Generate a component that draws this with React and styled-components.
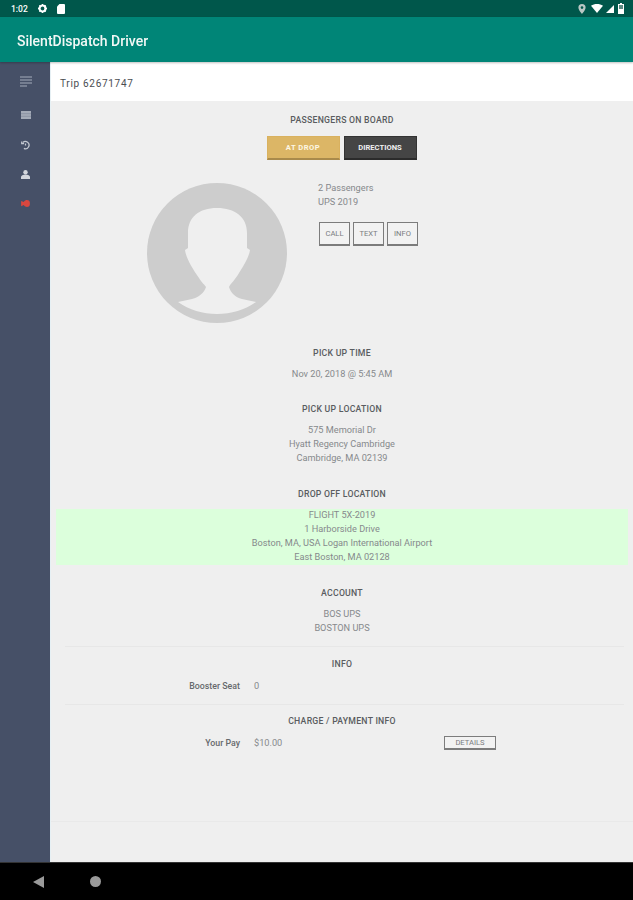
import styled, { createGlobalStyle } from 'styled-components';

const GlobalStyle = createGlobalStyle`
  html, body {
    margin: 0;
    padding: 0;
    background: #000;
  }
  * {
    box-sizing: border-box;
  }
`;

const Screen = styled.div`
  width: 633px;
  height: 900px;
  display: flex;
  flex-direction: column;
  overflow: hidden;
  font-family: Roboto, 'Liberation Sans', sans-serif;
  filter: blur(0.4px);
`;

const StatusBar = styled.div`
  height: 17px;
  flex: none;
  background: #00574b;
  color: #fff;
  display: flex;
  align-items: center;
  padding: 0 9px 0 11px;
  font-size: 8.5px;
  font-weight: 500;
`;

const StatusLeft = styled.div`
  display: flex;
  align-items: center;
  gap: 10px;
`;

const StatusRight = styled.div`
  margin-left: auto;
  display: flex;
  align-items: center;
  gap: 3px;
`;

const AppBar = styled.div`
  height: 45px;
  flex: none;
  background: #008577;
  color: #f2f8f6;
  display: flex;
  align-items: center;
  padding: 3px 0 0 17px;
  font-size: 14px;
  font-weight: 500;
  box-shadow: 0 1px 2px rgba(0, 0, 0, 0.25);
  position: relative;
`;

const Body = styled.div`
  flex: 1;
  min-height: 0;
  display: flex;
`;

const SideNav = styled.nav`
  width: 50px;
  flex: none;
  background: #465067;
  display: flex;
  flex-direction: column;
  align-items: center;
  padding-top: 14px;
`;

const NavIcon = styled.svg`
  display: block;
  margin-top: ${p => p.$top}px;
  margin-left: 1px;
`;

const Main = styled.main`
  flex: 1;
  min-width: 0;
  background: #efefef;
  border-left: 1px solid #e6f0f4;
  display: flex;
  flex-direction: column;
`;

const TripHeader = styled.div`
  height: 39px;
  flex: none;
  background: #fff;
  display: flex;
  align-items: center;
  padding: 3px 0 0 9px;
  font-size: 10px;
  letter-spacing: 0.7px;
  color: #4a4d51;
`;

const Scroll = styled.div`
  flex: 1;
  min-height: 0;
  padding-top: 12px;
`;

const Heading = styled.div`
  height: 14px;
  line-height: 14px;
  margin-top: ${p => p.$top || 0}px;
  text-align: center;
  font-size: 8.7px;
  font-weight: 500;
  letter-spacing: 0.25px;
  color: #595c60;
`;

const ActionRow = styled.div`
  display: flex;
  justify-content: center;
  gap: 4px;
  margin-top: 9px;
  padding-right: 1px;
`;

const ActionButton = styled.button`
  width: 73px;
  height: 24px;
  padding: 0;
  border: 1px solid ${p => (p.$dark ? '#333' : '#d9b15f')};
  border-bottom: 2px solid ${p => (p.$dark ? '#2b2b2b' : '#a98a4b')};
  background: ${p => (p.$dark ? '#454545' : '#dcb666')};
  color: ${p => (p.$dark ? '#f0f0f0' : '#fdf6e4')};
  font-family: inherit;
  font-size: 7.6px;
  font-weight: 700;
  letter-spacing: ${p => (p.$dark ? 0 : 0.5)}px;
`;

const Profile = styled.div`
  display: flex;
  gap: 31px;
  margin-top: 23px;
  padding-left: 96px;
`;

const Avatar = styled.svg`
  display: block;
  flex: none;
`;

const ProfileInfo = styled.div`
  margin-top: -2px;
`;

const Value = styled.div`
  line-height: 14px;
  font-size: 9.2px;
  color: #86898c;
  text-align: ${p => p.$align || 'center'};
`;

const ContactRow = styled.div`
  display: flex;
  gap: 3px;
  margin-top: 13px;
  margin-left: 1px;
`;

const OutlineButton = styled.button`
  width: ${p => p.$width || 31}px;
  height: ${p => p.$height || 24}px;
  padding: 0;
  border: 1px solid #7c7c7c;
  border-bottom-width: 2px;
  background: #f2f2f2;
  color: #7a7c7f;
  font-family: inherit;
  font-size: 7.6px;
`;

const ValueBlock = styled.div`
  margin-top: ${p => p.$top || 7}px;
`;

const Highlight = styled.div`
  display: flow-root;
  margin: 8px 5px 0 5px;
  height: 56px;
  background: #dcffdc;
`;

const HighlightLines = styled.div`
  margin-top: -1px;
`;

const Divider = styled.hr`
  margin: ${p => p.$top}px 9px 0 14px;
  border: 0;
  border-top: 1px solid #e7e7e7;
`;

const DetailRow = styled.div`
  display: grid;
  grid-template-columns: 189px 176px 52px;
  column-gap: 14px;
  align-items: center;
  margin-top: ${p => p.$top}px;
  height: 14px;
`;

const RowLabel = styled.div`
  text-align: right;
  font-size: 8.8px;
  font-weight: 500;
  color: #66696c;
`;

const FooterRule = styled.hr`
  margin: 71px 0 0;
  border: 0;
  border-top: 1px solid #e9e9e9;
`;

const BottomBar = styled.div`
  height: 38px;
  flex: none;
  background: #000;
  display: flex;
  align-items: center;
  padding: 0 0 0 33px;
  gap: 46px;
  border-top: 1px solid #333;
`;

const StatusIcons = () => (
  <>
    <svg width="9" height="9" viewBox="0 0 10 10">
      <circle cx="5" cy="5" r="3.3" fill="none" stroke="#fff" strokeWidth="2.4" />
      <path d="M5 0v2M5 8v2M0 5h2M8 5h2M1.5 1.5l1.2 1.2M7.3 7.3l1.2 1.2M8.5 1.5L7.3 2.7M2.7 7.3L1.5 8.5" stroke="#fff" strokeWidth="1.4" />
    </svg>
    <svg width="8" height="10" viewBox="0 0 8 10">
      <path d="M2.5 0H7a1 1 0 0 1 1 1v8a1 1 0 0 1-1 1H1a1 1 0 0 1-1-1V2.5z" fill="#fff" />
    </svg>
  </>
);

const SystemIcons = () => (
  <>
    <svg width="8" height="10" viewBox="0 0 8 10" style={{ marginRight: 2 }}>
      <path d="M4 0a3.6 3.6 0 0 1 3.6 3.6C7.6 6.2 4 10 4 10S.4 6.2.4 3.6A3.6 3.6 0 0 1 4 0z" fill="#b9c7c4" />
      <circle cx="4" cy="3.6" r="1.3" fill="#00574b" />
    </svg>
    <svg width="12" height="9" viewBox="0 0 12 9">
      <path d="M0 1.8C3.4-.6 8.6-.6 12 1.8L6 9z" fill="#fff" />
    </svg>
    <svg width="8" height="8" viewBox="0 0 8 8">
      <path d="M8 0v8H0z" fill="#fff" />
    </svg>
    <svg width="6" height="11" viewBox="0 0 6 11" style={{ marginLeft: 1 }}>
      <path d="M2 0h2v1h2v10H0V1h2z" fill="#fff" />
      <rect x="1" y="2" width="4" height="4" fill="#5d8b83" />
    </svg>
  </>
);

const AvatarIcon = () => (
  <Avatar width="140" height="140" viewBox="0 0 140 140">
    <circle cx="70" cy="70" r="70" fill="#cdcdcd" />
    <path
      d="M70 25C52 25 41 34 41 50L41 65L38 67C39 75 45 85 52 95C55 100 58 102 59 104C57 110 52 114 45 116L31 119C42 127 56 131 70 131C84 131 98 127 109 119L95 116C88 114 84 110 82 104C84 100 88 97 92 90C96 84 102 74 103 67L100 65L100 50C100 34 88 25 70 25Z"
      fill="#efefef"
    />
  </Avatar>
);

export default function App() {
  return (
    <>
      <GlobalStyle />
      <Screen>
        <StatusBar>
          <StatusLeft>
            <span>1:02</span>
            <StatusIcons />
          </StatusLeft>
          <StatusRight>
            <SystemIcons />
          </StatusRight>
        </StatusBar>
        <AppBar>SilentDispatch Driver</AppBar>
        <Body>
          <SideNav>
            <NavIcon $top={0} width="12" height="11" viewBox="0 0 12 11" fill="none" stroke="#858da0" strokeWidth="1.3">
              <path d="M0 1h12M0 4h12M0 7h12M0 10h7" />
            </NavIcon>
            <NavIcon $top={24} width="10" height="8" viewBox="0 0 10 8">
              <rect width="10" height="8" fill="#a4abb8" />
              <path d="M0 2.7h10M0 5.3h10" stroke="#7f889b" strokeWidth="0.7" />
            </NavIcon>
            <NavIcon $top={21} width="9" height="10" viewBox="0 0 10 10" fill="none" stroke="#c3c8d1" strokeWidth="1.4">
              <path d="M2 2.4A4 4 0 1 1 3.2 8.8" />
              <path d="M.8 1v2.6h2.600" />
              <path d="M5 3.4v2.200" />
            </NavIcon>
            <NavIcon $top={20} width="9" height="9" viewBox="0 0 9 9">
              <circle cx="4.5" cy="2.3" r="2.2" fill="#d3d6dd" />
              <path d="M0 9V7c0-1.500 2-2.400 4.500-2.400S9 5.500 9 7v2z" fill="#d3d6dd" />
            </NavIcon>
            <NavIcon $top={21} width="9" height="7" viewBox="0 0 10 8">
              <path d="M0 1l3 1.200C4 .6 5.500 0 6.500 0A3.700 3.700 0 0 1 10 4 3.700 3.700 0 0 1 6.500 8C5.500 8 4 7.400 3 5.800L0 7z" fill="#d9473f" />
            </NavIcon>
          </SideNav>
          <Main>
            <TripHeader>Trip 62671747</TripHeader>
            <Scroll>
              <Heading>PASSENGERS ON BOARD</Heading>
              <ActionRow>
                <ActionButton>AT DROP</ActionButton>
                <ActionButton $dark>DIRECTIONS</ActionButton>
              </ActionRow>
              <Profile>
                <AvatarIcon />
                <ProfileInfo>
                  <Value $align="left">2 Passengers</Value>
                  <Value $align="left">UPS 2019</Value>
                  <ContactRow>
                    <OutlineButton>CALL</OutlineButton>
                    <OutlineButton>TEXT</OutlineButton>
                    <OutlineButton>INFO</OutlineButton>
                  </ContactRow>
                </ProfileInfo>
              </Profile>

              <Heading $top={23}>PICK UP TIME</Heading>
              <ValueBlock>
                <Value>Nov 20, 2018 @ 5:45 AM</Value>
              </ValueBlock>

              <Heading $top={21}>PICK UP LOCATION</Heading>
              <ValueBlock>
                <Value>575 Memorial Dr</Value>
                <Value>Hyatt Regency Cambridge</Value>
                <Value>Cambridge, MA 02139</Value>
              </ValueBlock>

              <Heading $top={22}>DROP OFF LOCATION</Heading>
              <Highlight>
                <HighlightLines>
                  <Value>FLIGHT 5X-2019</Value>
                  <Value>1 Harborside Drive</Value>
                  <Value>Boston, MA, USA Logan International Airport</Value>
                  <Value>East Boston, MA 02128</Value>
                </HighlightLines>
              </Highlight>

              <Heading $top={21}>ACCOUNT</Heading>
              <ValueBlock>
                <Value>BOS UPS</Value>
                <Value>BOSTON UPS</Value>
              </ValueBlock>
              <Divider $top={11} />

              <Heading $top={10}>INFO</Heading>
              <DetailRow $top={8}>
                <RowLabel>Booster Seat</RowLabel>
                <Value $align="left">0</Value>
              </DetailRow>
              <Divider $top={11} />

              <Heading $top={9}>CHARGE / PAYMENT INFO</Heading>
              <DetailRow $top={8}>
                <RowLabel>Your Pay</RowLabel>
                <Value $align="left">$10.00</Value>
                <OutlineButton $width={52} $height={14}>DETAILS</OutlineButton>
              </DetailRow>
              <FooterRule />
            </Scroll>
          </Main>
        </Body>
        <BottomBar>
          <svg width="11" height="12" viewBox="0 0 11 12">
            <path d="M11 0v12L0 6z" fill="#9a9a9a" />
          </svg>
          <svg width="11" height="11" viewBox="0 0 11 11">
            <circle cx="5.5" cy="5.5" r="5.5" fill="#9a9a9a" />
          </svg>
        </BottomBar>
      </Screen>
    </>
  );
}
